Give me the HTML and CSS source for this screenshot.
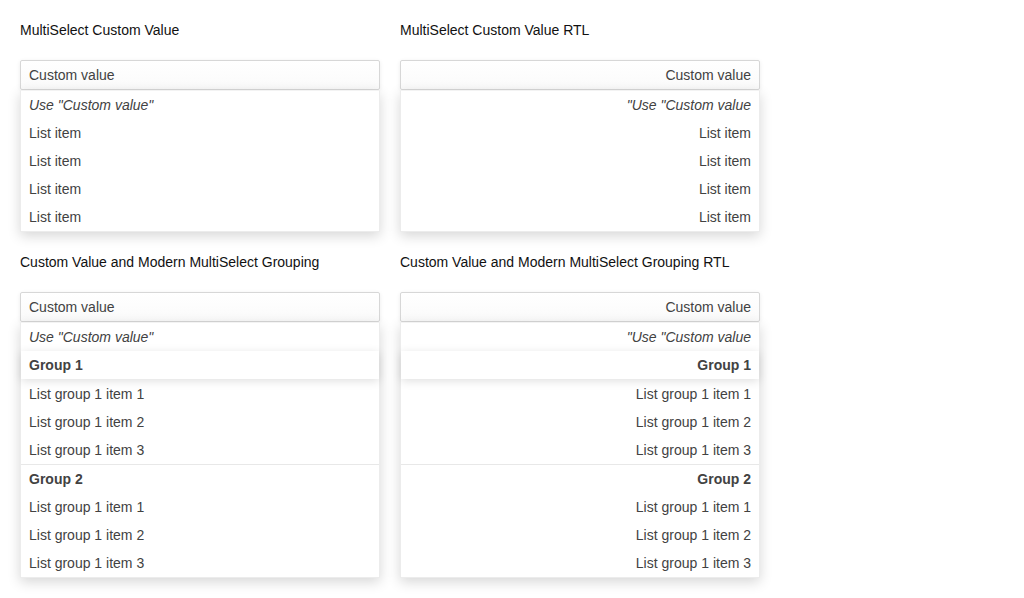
FILE: index.html
```html
<!DOCTYPE html>
<html lang="en">
<head>
<meta charset="utf-8">
<title>MultiSelect Custom Value</title>
<link rel="stylesheet" href="styles.css">
</head>
<body>
<div class="demos">
  <section class="demo">
    <h2 class="title">MultiSelect Custom Value</h2>
    <div class="select">
      <div class="input">Custom value</div>
      <ul class="popup">
        <li class="item custom">Use "Custom value"</li>
        <li class="item">List item</li>
        <li class="item">List item</li>
        <li class="item">List item</li>
        <li class="item">List item</li>
      </ul>
    </div>
  </section>
  <section class="demo">
    <h2 class="title">MultiSelect Custom Value RTL</h2>
    <div class="select" dir="rtl">
      <div class="input">Custom value</div>
      <ul class="popup">
        <li class="item custom">Use "Custom value"</li>
        <li class="item">List item</li>
        <li class="item">List item</li>
        <li class="item">List item</li>
        <li class="item">List item</li>
      </ul>
    </div>
  </section>
  <section class="demo">
    <h2 class="title">Custom Value and Modern MultiSelect Grouping</h2>
    <div class="select">
      <div class="input">Custom value</div>
      <div class="popup">
        <div class="item custom">Use "Custom value"</div>
        <div class="item sticky">Group 1</div>
        <ul class="list">
          <li class="item">List group 1 item 1</li>
          <li class="item">List group 1 item 2</li>
          <li class="item">List group 1 item 3</li>
          <li class="item group">Group 2</li>
          <li class="item">List group 1 item 1</li>
          <li class="item">List group 1 item 2</li>
          <li class="item">List group 1 item 3</li>
        </ul>
      </div>
    </div>
  </section>
  <section class="demo">
    <h2 class="title">Custom Value and Modern MultiSelect Grouping RTL</h2>
    <div class="select" dir="rtl">
      <div class="input">Custom value</div>
      <div class="popup">
        <div class="item custom">Use "Custom value"</div>
        <div class="item sticky">Group 1</div>
        <ul class="list">
          <li class="item">List group 1 item 1</li>
          <li class="item">List group 1 item 2</li>
          <li class="item">List group 1 item 3</li>
          <li class="item group">Group 2</li>
          <li class="item">List group 1 item 1</li>
          <li class="item">List group 1 item 2</li>
          <li class="item">List group 1 item 3</li>
        </ul>
      </div>
    </div>
  </section>
</div>
</body>
</html>
```

FILE: styles.css
```css
html, body {
  margin: 0;
  padding: 0;
  background: #fff;
}

body {
  font-family: "Liberation Sans", Arial, sans-serif;
  font-size: 14px;
  line-height: 20px;
  color: #424242;
}

.demos {
  display: grid;
  grid-template-columns: 360px 360px;
  column-gap: 20px;
  row-gap: 20px;
  padding: 20px;
}

.demo {
  display: flex;
  flex-direction: column;
  gap: 20px;
}

.title {
  margin: 0;
  font-size: 14px;
  font-weight: normal;
  line-height: 20px;
  color: #111;
}

.select {
  display: flex;
  flex-direction: column;
}

.input {
  box-sizing: border-box;
  height: 30px;
  padding: 4px 8px;
  border: 1px solid #d7d7d7;
  border-radius: 2px;
  background: linear-gradient(#ffffff, #fafafa);
  box-shadow: 0 1px 4px rgba(0, 0, 0, 0.08);
  color: #424242;
}

.popup {
  margin: 0;
  padding: 0;
  list-style: none;
  background: #fff;
  border: 1px solid #ececec;
  border-top-color: #f3f3f3;
  box-shadow: 0 4px 12px rgba(0, 0, 0, 0.16);
}

.list {
  margin: 0;
  padding: 0;
  list-style: none;
  border-top: 1px solid transparent;
}

.item {
  height: 28px;
  box-sizing: border-box;
  padding: 4px 8px;
  line-height: 20px;
  white-space: nowrap;
}

.custom {
  font-style: italic;
}

.sticky {
  position: relative;
  z-index: 1;
  font-weight: bold;
  background: #fff;
  box-shadow: 0 2px 10px rgba(0, 0, 0, 0.13);
}

.group {
  height: 29px;
  font-weight: bold;
  border-top: 1px solid #e8e8e8;
}
```
